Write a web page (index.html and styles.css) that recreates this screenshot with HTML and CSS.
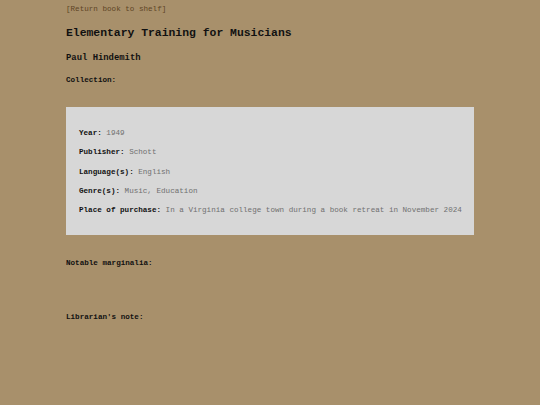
FILE: index.html
```html
<!DOCTYPE html>
<html lang="en">
<head>
<meta charset="utf-8">
<title>Elementary Training for Musicians</title>
<link rel="stylesheet" href="styles.css">
</head>
<body>
<main class="page">
  <a class="back" href="#">[Return book to shelf]</a>
  <h1 class="title">Elementary Training for Musicians</h1>
  <h2 class="author">Paul Hindemith</h2>
  <p class="field">Collection:</p>
  <section class="details">
    <p class="row"><b>Year:</b> <span>1949</span></p>
    <p class="row"><b>Publisher:</b> <span>Schott</span></p>
    <p class="row"><b>Language(s):</b> <span>English</span></p>
    <p class="row"><b>Genre(s):</b> <span>Music, Education</span></p>
    <p class="row"><b>Place of purchase:</b> <span>In a Virginia college town during a book retreat in November 2024</span></p>
  </section>
  <p class="field marginalia">Notable marginalia:</p>
  <p class="field note">Librarian's note:</p>
</main>
</body>
</html>
```
FILE: styles.css
```css
html, body {
  margin: 0;
  padding: 0;
}

body {
  background: #a8906b;
  color: #111;
  font-family: "Liberation Mono", "Courier New", monospace;
  font-size: 7.6px;
}

.page {
  width: 408px;
  margin: 0 auto;
  padding-top: 4px;
  display: flex;
  flex-direction: column;
  align-items: flex-start;
}

.back {
  color: #5e4525;
  text-decoration: none;
  line-height: 10px;
}

.title {
  margin: 12px 0 0;
  font-size: 11.4px;
  line-height: 14px;
  font-weight: bold;
}

.author {
  margin: 12.5px 0 0;
  font-size: 8.9px;
  line-height: 11px;
  font-weight: bold;
}

.field {
  margin: 11.5px 0 0;
  line-height: 10px;
  font-weight: bold;
}

.details {
  align-self: stretch;
  margin-top: 22px;
  background: #d7d7d7;
  padding: 21px 13px 20px;
  display: flex;
  flex-direction: column;
  gap: 9.25px;
}

.row {
  margin: 0;
  line-height: 10px;
  white-space: nowrap;
}

.row span {
  color: #707070;
}

.marginalia {
  margin-top: 22.5px;
}

.note {
  margin-top: 44.5px;
}
```
